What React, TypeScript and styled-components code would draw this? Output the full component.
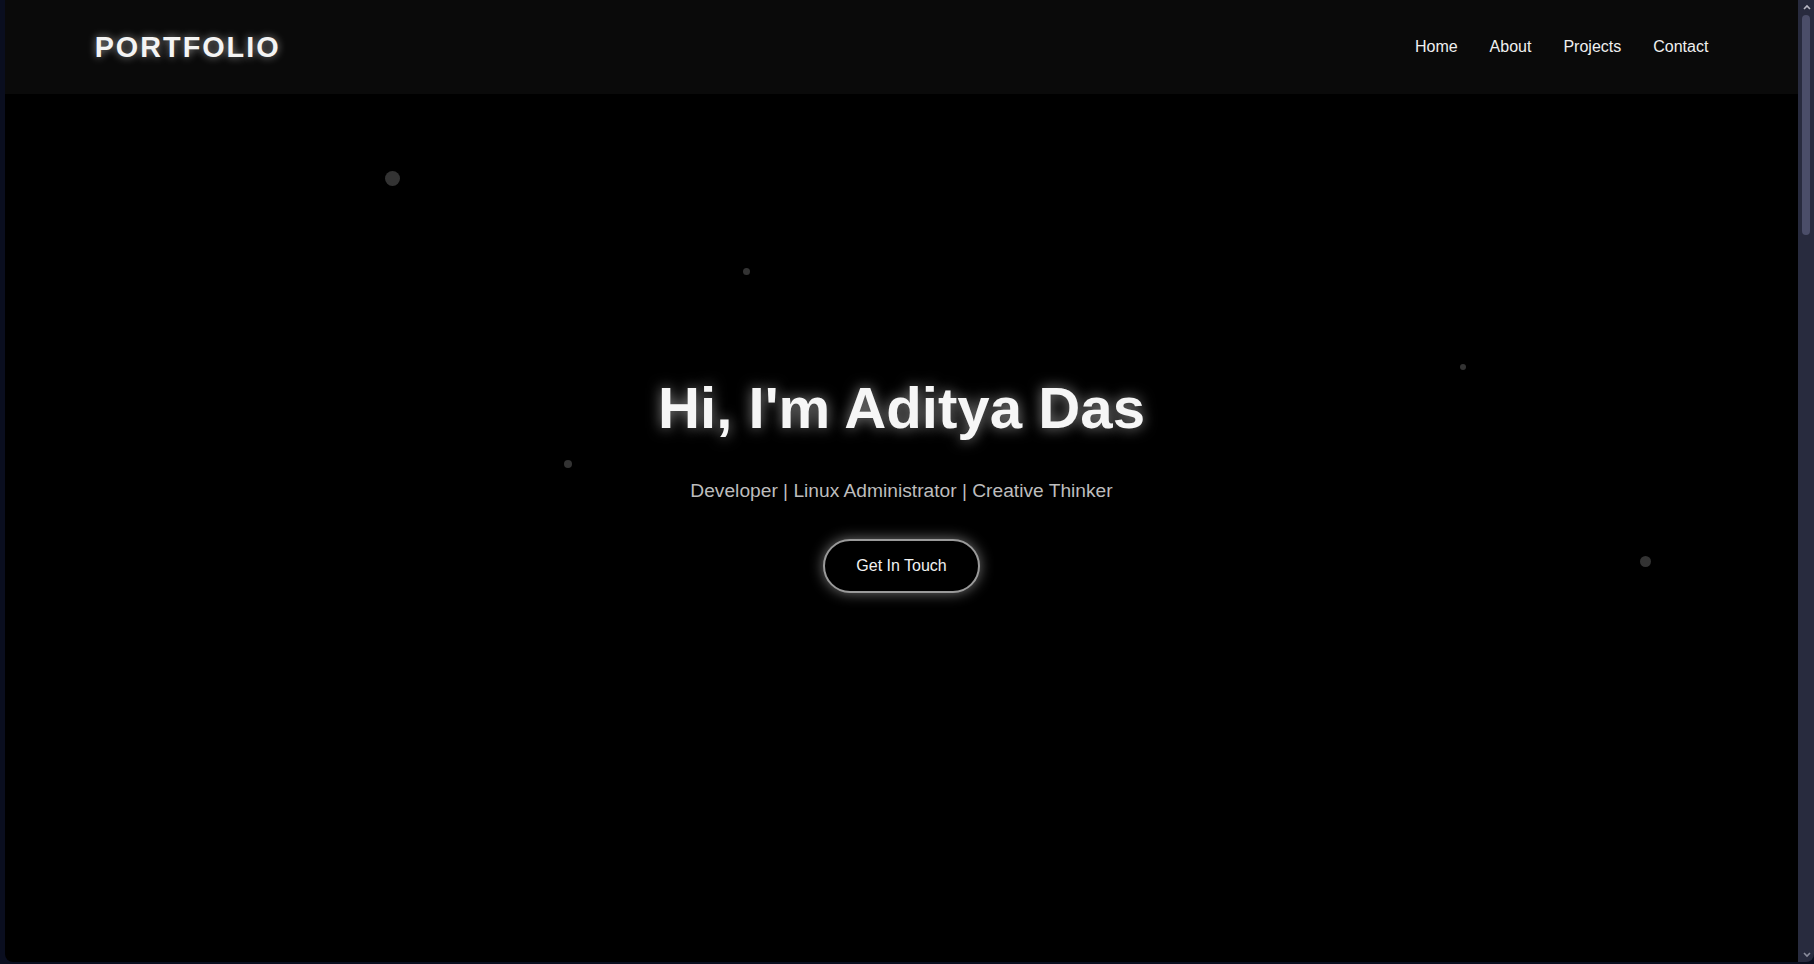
import React from "react";
import styled, { createGlobalStyle } from "styled-components";

const GlobalStyle = createGlobalStyle`
  * { box-sizing: border-box; }
  html, body { margin: 0; padding: 0; height: 100%; overflow: hidden; }
  body {
    background: #0a0e1f;
    font-family: "Liberation Sans", Arial, sans-serif;
    color: #fff;
  }
  #root { height: 100%; }
`;

const Frame = styled.div`
  display: flex;
  height: 100vh;
  padding: 0 0 2px 5px;
  background: #0a0e1f;
`;

const Page = styled.div`
  flex: 1;
  display: flex;
  flex-direction: column;
  background: #000;
  border-bottom-left-radius: 8px;
  overflow: hidden;
  min-width: 0;
`;

const Header = styled.header`
  height: 94px;
  flex-shrink: 0;
  background: #0a0a0a;
  display: flex;
  align-items: center;
  justify-content: space-between;
  padding: 0 5%;
`;

const Logo = styled.div`
  font-size: 28.8px;
  font-weight: 700;
  letter-spacing: 2px;
  color: #f4f4f4;
  text-shadow: 0 0 8px rgba(255, 255, 255, 0.55);
`;

const Nav = styled.nav`
  display: flex;
  gap: 32px;
`;

const NavLink = styled.a`
  font-size: 16px;
  color: #f0f0f0;
  text-decoration: none;
`;

const Hero = styled.section`
  flex: 1;
  position: relative;
  display: flex;
  flex-direction: column;
  align-items: center;
  padding-top: 280px;
`;

const Title = styled.h1`
  margin: 0 0 39px;
  font-size: 58.2px;
  font-weight: 700;
  line-height: normal;
  color: #f6f6f6;
  text-shadow: 0 0 14px rgba(255, 255, 255, 0.55);
`;

const Subtitle = styled.p`
  margin: 0 0 37px;
  font-size: 19.2px;
  line-height: normal;
  color: #bdbdbd;
`;

const Button = styled.button`
  height: 54px;
  padding: 0 31px;
  border-radius: 30px;
  border: 2px solid #9a9a9a;
  background: #000;
  color: #f2f2f2;
  font-family: "Liberation Sans", Arial, sans-serif;
  font-size: 16px;
  box-shadow: 0 0 14px rgba(255, 255, 255, 0.45);
  cursor: pointer;
`;

const Particle = styled.span<{ $size: number }>`
  position: absolute;
  width: ${(p) => p.$size}px;
  height: ${(p) => p.$size}px;
  border-radius: 50%;
  background: #333;
`;

const Scrollbar = styled.div`
  width: 16px;
  flex-shrink: 0;
  background: #282b3e;
  border-bottom-right-radius: 8px;
  display: flex;
  flex-direction: column;
  align-items: center;
`;

const Arrow = styled.div`
  height: 14px;
  width: 100%;
  display: flex;
  align-items: center;
  justify-content: center;
  padding-left: 1px;
`;

const Thumb = styled.div`
  width: 8px;
  height: 220px;
  margin-top: 1px;
  border-radius: 4px;
  background: #4b4e69;
`;

const Spacer = styled.div`
  flex: 1;
`;

const particles = [
  { left: 380, top: 77, size: 15 },
  { left: 738, top: 174, size: 7 },
  { left: 559, top: 366, size: 8 },
  { left: 1455, top: 270, size: 6 },
  { left: 1635, top: 462, size: 11 },
];

export default function App() {
  return (
    <>
      <GlobalStyle />
      <Frame>
        <Page>
          <Header>
            <Logo>PORTFOLIO</Logo>
            <Nav>
              <NavLink href="#home">Home</NavLink>
              <NavLink href="#about">About</NavLink>
              <NavLink href="#projects">Projects</NavLink>
              <NavLink href="#contact">Contact</NavLink>
            </Nav>
          </Header>
          <Hero>
            {particles.map((p, i) => (
              <Particle
                key={i}
                $size={p.size}
                style={{ left: p.left, top: p.top }}
              />
            ))}
            <Title>Hi, I'm Aditya Das</Title>
            <Subtitle>Developer | Linux Administrator | Creative Thinker</Subtitle>
            <Button>Get In Touch</Button>
          </Hero>
        </Page>
        <Scrollbar>
          <Arrow>
            <svg width="8" height="6" viewBox="0 0 8 6">
              <path d="M1 5 L4 2 L7 5" stroke="#b8b8c4" strokeWidth="1.6" fill="none" />
            </svg>
          </Arrow>
          <Thumb />
          <Spacer />
          <Arrow>
            <svg width="8" height="6" viewBox="0 0 8 6">
              <path d="M1 1 L4 4 L7 1" stroke="#8a8c9c" strokeWidth="1.6" fill="none" />
            </svg>
          </Arrow>
        </Scrollbar>
      </Frame>
    </>
  );
}
